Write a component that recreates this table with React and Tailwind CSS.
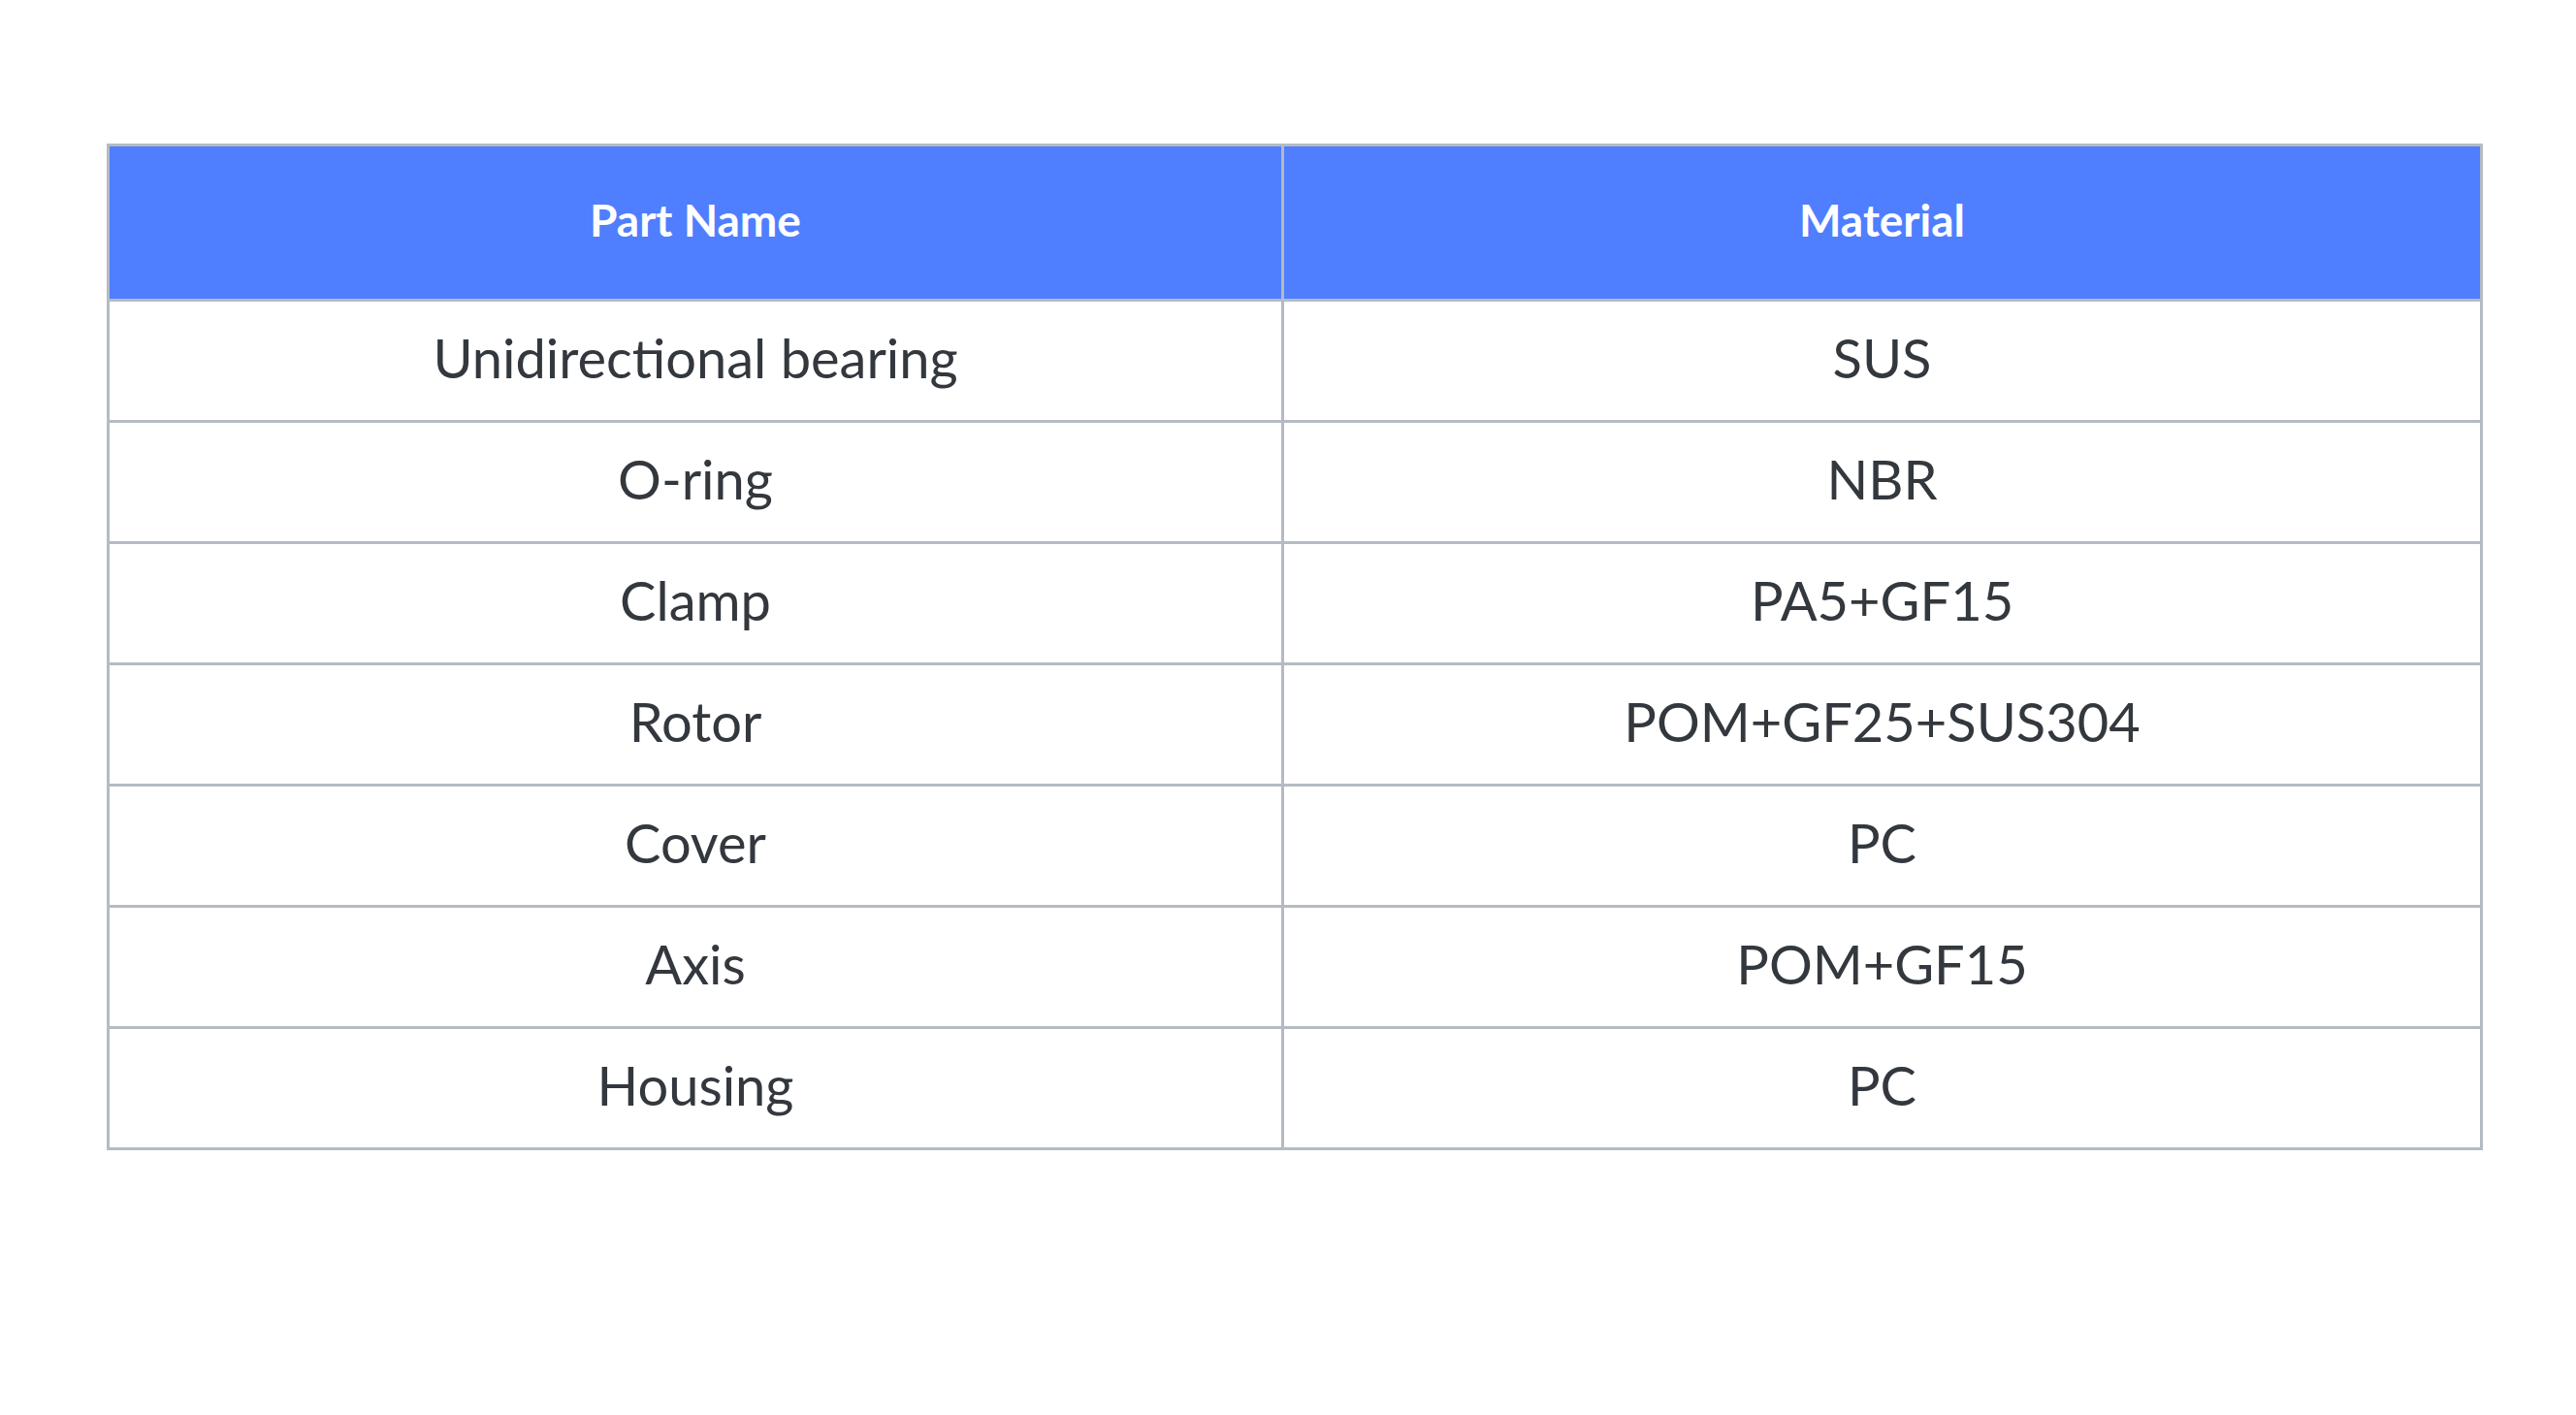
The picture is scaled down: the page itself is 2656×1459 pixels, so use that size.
import React from "react";

const rows = [
  ["Unidirectional bearing", "SUS"],
  ["O-ring", "NBR"],
  ["Clamp", "PA5+GF15"],
  ["Rotor", "POM+GF25+SUS304"],
  ["Cover", "PC"],
  ["Axis", "POM+GF15"],
  ["Housing", "PC"],
];

export default function App() {
  return (
    <div className="w-[2656px] h-[1459px] bg-white pt-[148px] pl-[110px]" style={{ fontFamily: "Lato, 'Noto Sans', sans-serif" }}>
      <table className="border-collapse border-[3px] border-[#b5bbc3] w-[2447px] table-fixed">
        <colgroup>
          <col className="w-[1211px]" />
          <col className="w-[1236px]" />
        </colgroup>
        <thead>
          <tr className="h-[160px] bg-[#4f7eff]">
            <th className="border-[3px] border-[#b5bbc3] text-white text-[46px] font-bold text-center align-middle pb-[6px]">Part Name</th>
            <th className="border-[3px] border-[#b5bbc3] text-white text-[46px] font-bold text-center align-middle pb-[6px]">Material</th>
          </tr>
        </thead>
        <tbody>
          {rows.map(([a, b]) => (
            <tr key={a + b} className="h-[125px]">
              <td className="border-[3px] border-[#b5bbc3] text-[#33383e] text-[56px] text-center align-middle pb-[6px]">{a}</td>
              <td className="border-[3px] border-[#b5bbc3] text-[#33383e] text-[56px] text-center align-middle pb-[6px]">{b}</td>
            </tr>
          ))}
        </tbody>
      </table>
    </div>
  );
}
